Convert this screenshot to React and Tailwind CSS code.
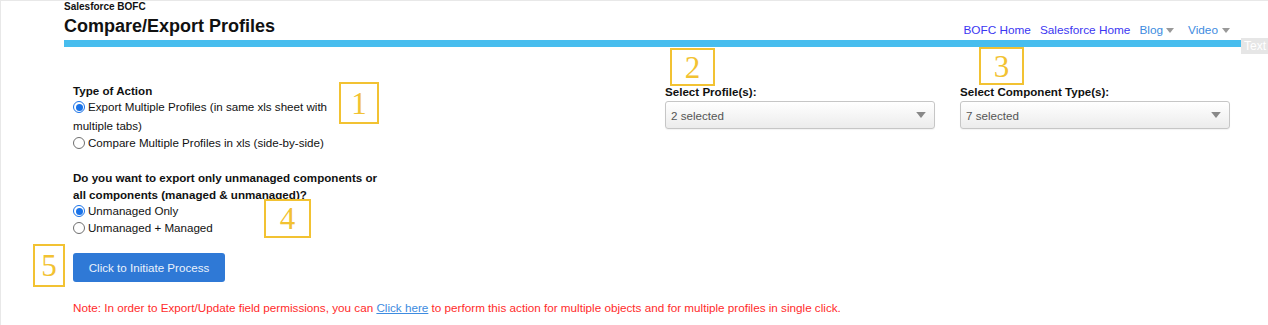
import React from "react";

const Caret = ({ className = "" }) => (
  <svg width="8" height="5" viewBox="0 0 8 5" className={className}>
    <path d="M0 0 L8 0 L4 5 Z" fill="currentColor" />
  </svg>
);

function Radio({ checked }) {
  return checked ? (
    <span className="shrink-0 w-[12px] h-[12px] rounded-full border border-[#1a73e8] bg-white flex items-center justify-center mr-[3px]">
      <span className="w-[7px] h-[7px] rounded-full bg-[#1a73e8]" />
    </span>
  ) : (
    <span className="shrink-0 w-[12px] h-[12px] rounded-full border border-[#6f6f6f] bg-white mr-[3px]" />
  );
}

function Line({ children, className = "" }) {
  return <div className={`h-[16px] leading-[16px] flex items-center whitespace-nowrap ${className}`}>{children}</div>;
}

function FakeSelect({ value }) {
  return (
    <div className="mt-[1px] w-[270px] h-[28px] rounded-[3px] border border-[#c6c6c6] bg-gradient-to-b from-white to-[#ececec] flex items-center justify-between pl-[5px] pr-[8px] shadow-[0_1px_1px_rgba(0,0,0,0.05)]">
      <span className="text-[11.6px] text-[#555] pt-[1px]">{value}</span>
      <Caret className="text-[#888] w-[10px] h-[6px]" />
    </div>
  );
}

function Marker({ n, className }) {
  return (
    <div
      className={`absolute border-2 border-[#f2c232] flex items-center justify-center text-[#f2c232] text-[31px] leading-none font-['Liberation_Serif',serif] ${className}`}
    >
      {n}
    </div>
  );
}

export default function App() {
  return (
    <div className="relative w-[1268px] h-[325px] overflow-hidden bg-white border-l border-t border-[#e8e8e8] font-['Liberation_Sans',Arial,sans-serif] text-[#111]">
      <div className="ml-[63px] w-[1179px]">
        {/* HEADER */}
        <div className="text-[10px] font-bold leading-[10px] pt-[1px]">Salesforce BOFC</div>
        <div className="flex items-end justify-between h-[25px]">
          <h1 className="text-[18px] font-bold leading-[22px]">Compare/Export Profiles</h1>
          <nav className="flex items-center text-[11.8px] leading-[14px] pr-[13px] pb-0">
            <a className="text-[#3b36f2]">BOFC Home</a>
            <a className="text-[#3b36f2] ml-[9px]">Salesforce Home</a>
            <a className="text-[#3d8be0] ml-[9px] flex items-center">
              Blog <Caret className="text-[#999] ml-[3px]" />
            </a>
            <a className="text-[#3d8be0] ml-[14px] flex items-center">
              Video <Caret className="text-[#999] ml-[4px]" />
            </a>
          </nav>
        </div>
        <div className="h-[7px] bg-[#47bdee] mt-[3px]" />

        {/* CONTENT */}
        <div className="flex pl-[9px] pt-[36px] text-[11.6px]">
          <div className="w-[592px]">
            <Line className="font-bold">Type of Action</Line>
            <Line>
              <Radio checked />Export Multiple Profiles (in same xls sheet with
            </Line>
            <Line className="mt-[3px]">multiple tabs)</Line>
            <Line className="mt-[1px]">
              <Radio />Compare Multiple Profiles in xls (side-by-side)
            </Line>

            <Line className="font-bold mt-[19px]">Do you want to export only unmanaged components or</Line>
            <Line className="font-bold mt-[1px]">all components (managed &amp; unmanaged)?</Line>
            <Line>
              <Radio checked />Unmanaged Only
            </Line>
            <Line className="mt-[1px]">
              <Radio />Unmanaged + Managed
            </Line>

            <button className="mt-[17px] w-[152px] h-[29px] rounded-[3px] bg-[#2f79d6] text-[#eaf2fc] text-[11.6px] block">
              Click to Initiate Process
            </button>

            <Line className="mt-[18px] text-[#ff2b2b] text-[11.7px]">
              Note: In order to Export/Update field permissions, you can&nbsp;
              <a className="text-[#3d8be0] underline">Click here</a>&nbsp;to perform this action for multiple objects and for
              multiple profiles in single click.
            </Line>
          </div>

          <div className="w-[295px] pt-[1px]">
            <Line className="font-bold">Select Profile(s):</Line>
            <FakeSelect value="2 selected" />
          </div>

          <div className="w-[270px] pt-[1px]">
            <Line className="font-bold">Select Component Type(s):</Line>
            <FakeSelect value="7 selected" />
          </div>
        </div>
      </div>

      {/* overlays */}
      <div className="absolute left-[1240px] top-[37px] w-[30px] h-[16px] bg-[#e6e6e6] text-white text-[12px] leading-[16px] pl-[3px]">
        Text
      </div>
      <Marker n="1" className="left-[338px] top-[81px] w-[40px] h-[42px]" />
      <Marker n="2" className="left-[669px] top-[47px] w-[45px] h-[38px]" />
      <Marker n="3" className="left-[978px] top-[46px] w-[45px] h-[38px]" />
      <Marker n="4" className="left-[263px] top-[198px] w-[47px] h-[39px]" />
      <Marker n="5" className="left-[32px] top-[243px] w-[32px] h-[43px]" />
    </div>
  );
}
